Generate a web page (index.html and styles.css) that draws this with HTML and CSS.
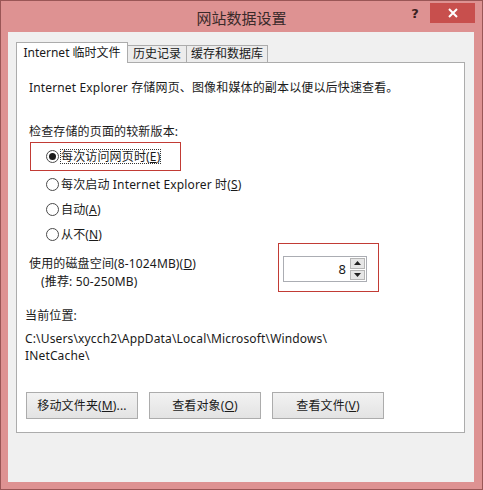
FILE: index.html
```html
<!DOCTYPE html>
<html lang="zh-CN">
<head>
<meta charset="utf-8">
<title>网站数据设置</title>
<link rel="stylesheet" href="styles.css">
</head>
<body>
<div class="window">
  <div class="titlebar">
    <div></div>
    <div class="title">网站数据设置</div>
    <div class="controls">
      <span class="help">?</span>
      <span class="close"><svg width="12" height="12" viewBox="0 0 12 12"><path d="M2 2 L10 10 M10 2 L2 10" stroke="#fff" stroke-width="2" fill="none"/></svg></span>
    </div>
  </div>
  <div class="client">
    <div class="tabs">
      <div class="tab active t1">Internet 临时文件</div>
      <div class="tab t2">历史记录</div>
      <div class="tab t3">缓存和数据库</div>
    </div>
    <div class="panel">
      <div class="desc">Internet Explorer 存储网页、图像和媒体的副本以便以后快速查看。</div>
      <div class="section">检查存储的页面的较新版本:</div>
      <div class="hl-radio">
        <div class="radio-row">
          <span class="radio checked"></span><span class="focus">每次访问网页时(<u>E</u>)</span>
        </div>
      </div>
      <div class="radio-row plain"><span class="radio"></span><span class="lbl">每次启动 Internet Explorer 时(<u>S</u>)</span></div>
      <div class="radio-row plain"><span class="radio"></span><span class="lbl">自动(<u>A</u>)</span></div>
      <div class="radio-row plain"><span class="radio"></span><span class="lbl">从不(<u>N</u>)</span></div>
      <div class="disk-row">
        <div class="disk-label">
          <div>使用的磁盘空间(8-1024MB)(<u>D</u>)</div>
          <div class="rec">(推荐: 50-250MB)</div>
        </div>
        <div class="hl-spin">
          <div class="spin">
            <div class="spin-val">8</div>
            <div class="spin-btns">
              <div class="sb"><svg width="7" height="4" viewBox="0 0 7 4"><path d="M0 4 L3.5 0 L7 4 Z" fill="#222"/></svg></div>
              <div class="sb"><svg width="7" height="4" viewBox="0 0 7 4"><path d="M0 0 L7 0 L3.5 4 Z" fill="#222"/></svg></div>
            </div>
          </div>
        </div>
      </div>
      <div class="loc-label">当前位置:</div>
      <div class="path">C:\Users\xycch2\AppData\Local\Microsoft\Windows\<br>INetCache\</div>
      <div class="buttons">
        <div class="btn">移动文件夹(<u>M</u>)...</div>
        <div class="btn">查看对象(<u>O</u>)</div>
        <div class="btn">查看文件(<u>V</u>)</div>
      </div>
    </div>
  </div>
</div>
</body>
</html>
```

FILE: styles.css
```css
* { box-sizing: border-box; }
html, body { margin: 0; padding: 0; background: #fff; }
body {
  font-family: "Noto Sans", "Noto Sans CJK SC", sans-serif;
  font-size: 12px;
  letter-spacing: 0.15px;
  color: #1a1a1a;
}
.window {
  width: 483px;
  height: 490px;
  background: #de9292;
  border: 1px solid #9a5656;
  display: flex;
  flex-direction: column;
}
.titlebar {
  height: 31px;
  display: grid;
  grid-template-columns: 1fr auto 1fr;
  align-items: start;
}
.title {
  font-family: "Noto Sans CJK SC", sans-serif;
  font-size: 15px;
  letter-spacing: 0;
  color: #3a2a2a;
  line-height: 31px;
  padding-top: 1px;
}
.controls {
  display: flex;
  justify-content: flex-end;
  align-items: flex-start;
  padding-right: 7px;
}
.help {
  font-family: "DejaVu Sans", sans-serif;
  font-weight: bold;
  font-size: 13px;
  color: #3b2020;
  width: 30px;
  text-align: center;
  line-height: 26px;
}
.close {
  width: 45px;
  height: 20px;
  margin-top: 2px;
  background: #c84f4d;
  display: flex;
  align-items: center;
  justify-content: center;
}
.client {
  margin: 0 8px 0 7px;
  height: 450px;
  background: #f0f0f0;
  padding: 10px 8px 0 8px;
}
.tabs {
  display: flex;
  align-items: flex-end;
  height: 20px;
}
.tab {
  height: 17px;
  border: 1px solid #acacac;
  border-bottom: none;
  border-left: none;
  background: #ececec;
  line-height: 16px;
  text-align: center;
  color: #1a1a1a;
  white-space: nowrap;
  letter-spacing: 0;
}
.tab.active {
  height: 21px;
  border-left: 1px solid #acacac;
  background: #fff;
  margin-bottom: -1px;
  position: relative;
  z-index: 1;
  line-height: 20px;
}
.t1 { width: 112px; }
.t2 { width: 59px; }
.t3 { width: 81px; }
.panel {
  width: 449px;
  height: 371px;
  background: #fff;
  border: 1px solid #acacac;
}
.desc {
  margin-top: 16px;
  padding-left: 12px;
  line-height: 17px;
  white-space: nowrap;
}
.section {
  margin-top: 27px;
  padding-left: 12px;
  line-height: 17px;
}
.hl-radio {
  margin-top: 2px;
  margin-left: 13px;
  width: 151px;
  height: 29px;
  border: 1px solid #c23b35;
  display: flex;
  align-items: center;
  padding-left: 15px;
}
.radio-row {
  display: flex;
  align-items: center;
  height: 17px;
  line-height: 17px;
  white-space: nowrap;
}
.radio-row.plain {
  margin-top: 8px;
  padding-left: 29px;
}
.hl-radio + .radio-row.plain { margin-top: 5px; }
.radio {
  width: 13px;
  height: 13px;
  border: 1px solid #4a4a4a;
  border-radius: 50%;
  background: #fff;
  display: flex;
  align-items: center;
  justify-content: center;
  flex-shrink: 0;
}
.radio.checked::after {
  content: "";
  width: 7px;
  height: 7px;
  border-radius: 50%;
  background: #1a1a1a;
}
.lbl { margin-left: 2px; }
.focus {
  margin-left: 1px;
  padding: 0 1px;
  outline: 1px dotted #333;
  outline-offset: -1px;
  line-height: 15px;
}
.disk-row {
  display: flex;
  align-items: flex-start;
  padding-left: 12px;
}
.disk-label {
  width: 249px;
  margin-top: 12px;
  line-height: 18px;
}
.rec { padding-left: 12px; }
.hl-spin {
  width: 101px;
  height: 49px;
  border: 1px solid #c23b35;
  padding: 12px 0 0 4px;
}
.spin {
  width: 84px;
  height: 26px;
  border: 1px solid #abadb3;
  display: flex;
  background: #fff;
}
.spin-val {
  flex: 1;
  text-align: right;
  font-size: 13px;
  line-height: 24px;
  padding-right: 4px;
}
.spin-btns {
  width: 16px;
  display: flex;
  flex-direction: column;
  gap: 1px;
  padding: 1px 1px 1px 0;
}
.sb {
  flex: 1;
  background: #e6e6e6;
  border: 1px solid #b5b5b5;
  display: flex;
  align-items: center;
  justify-content: center;
}
.loc-label {
  margin-top: 15px;
  padding-left: 8px;
  line-height: 17px;
}
.path {
  margin-top: 6px;
  padding-left: 8px;
  line-height: 17px;
  white-space: nowrap;
}
.buttons {
  margin-top: 28px;
  margin-left: 9px;
  display: flex;
  gap: 11px;
}
.btn {
  width: 112px;
  height: 27px;
  border: 1px solid #acacac;
  background: linear-gradient(#f2f2f2, #e3e3e3);
  text-align: center;
  line-height: 25px;
  white-space: nowrap;
}
```
